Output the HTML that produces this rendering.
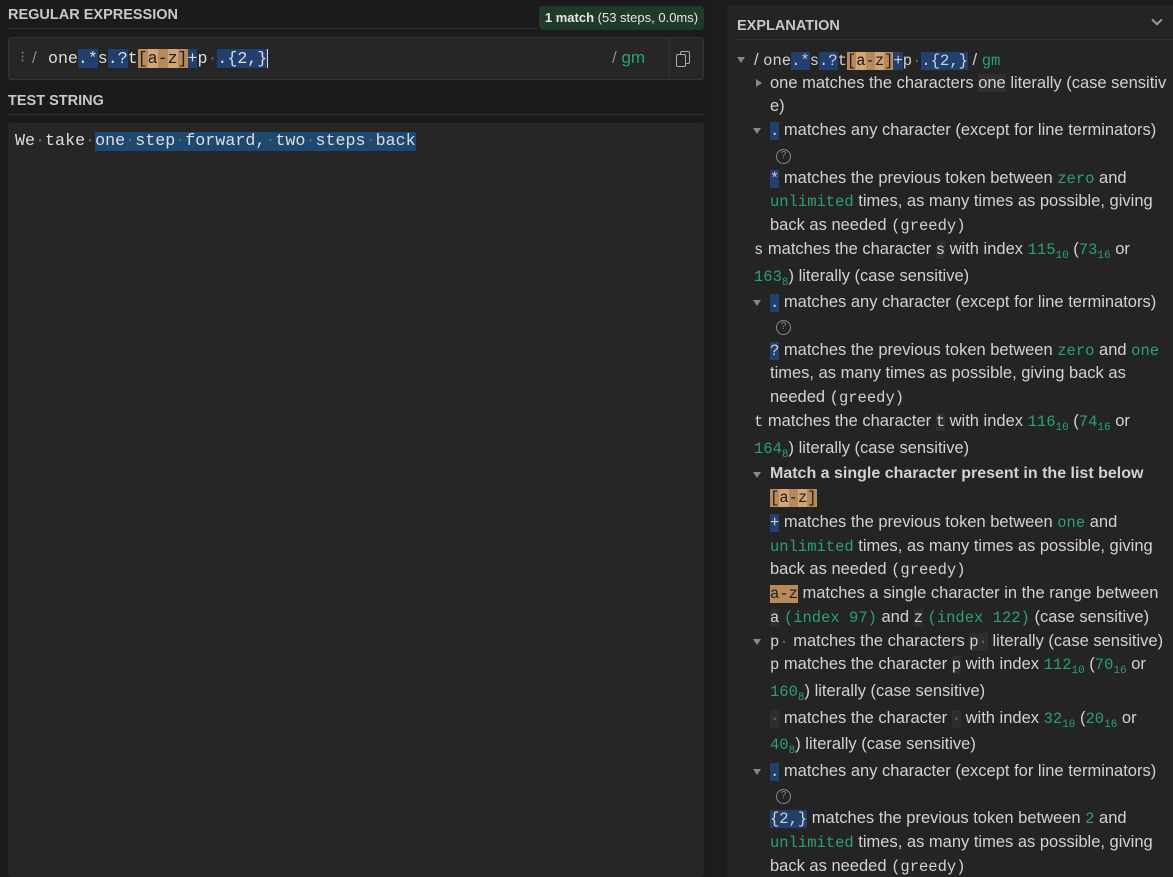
<!DOCTYPE html><html><head><style>
*{margin:0;padding:0;box-sizing:border-box}
body{width:1173px;height:877px;background:#1b1b1b;overflow:hidden;position:relative;font-family:"Liberation Sans",sans-serif;color:#d2d2d2}
.a{position:absolute;white-space:nowrap}
.m{font-family:"Liberation Mono",monospace}
.h{color:#c8c8c8;font-weight:bold;font-size:14.5px;letter-spacing:0}
.b{background:#22406e}
.o{background:#b8895b;color:#1e1e1e}
.o2{background:#d2a577}
.g{color:#29a36d}
.k{background:#2e2e2e}
.d{color:#666}
.ln{font-size:16.5px;line-height:20px}
.ln .m{font-size:15.5px}
sub{font-size:11px;vertical-align:-4px;line-height:0}
.tri{position:absolute;width:0;height:0;border-left:4.5px solid transparent;border-right:4.5px solid transparent;border-top:6px solid #888}
.trr{position:absolute;width:0;height:0;border-top:4.5px solid transparent;border-bottom:4.5px solid transparent;border-left:6px solid #888}
.q{position:absolute;width:15px;height:15px;border:1.5px solid #888;border-radius:50%;font-size:10px;color:#888;text-align:center;line-height:12px}
</style></head><body>
<div class="a h" style="left:8px;top:7px">REGULAR EXPRESSION</div>
<div class="a" style="left:8px;top:28px;width:530px;height:1px;background:#2e2e2e"></div>
<div class="a" style="left:539px;top:6px;width:165px;height:24px;background:#1f3a28;border-radius:4px;color:#e6e6e6;font-size:13px;line-height:24px;text-align:center"><b>1 match</b> (53 steps, 0.0ms)</div>
<div class="a" style="left:8px;top:37px;width:696px;height:43px;background:#262626;border:1px solid #333;border-radius:3px"></div>
<div class="a" style="left:669px;top:38px;width:1px;height:41px;background:#333"></div>
<div class="a" style="left:680px;top:51px;width:10px;height:13px;border:1.5px solid #aaa;border-radius:2px"></div>
<div class="a" style="left:676px;top:54px;width:10px;height:13px;border:1.5px solid #aaa;border-radius:2px;background:#262626"></div>
<div class="a d" style="left:20px;top:47px;font-size:16px;color:#777">⁝</div>
<div class="a" style="left:32px;top:48px;font-size:17px;color:#888">/</div>
<div class="a m" style="left:48px;top:49px;font-size:16.6px;color:#ddd">one<span class="b">.*</span>s<span class="b">.?</span>t<span class="o">[<span class="o2">a</span>-<span class="o2">z</span>]</span><span class="b">+</span>p<span class="d">·</span><span class="b">.{2,}</span><span style="border-left:1px solid #ddd"></span></div>
<div class="a" style="left:612px;top:48px;font-size:17px;color:#888">/ <span class="g">gm</span></div>
<div class="a h" style="left:8px;top:93px">TEST STRING</div>
<div class="a" style="left:8px;top:114px;width:696px;height:1px;background:#2e2e2e"></div>
<div class="a" style="left:8px;top:123px;width:696px;height:754px;background:#262626;border-radius:3px"></div>
<div class="a m" style="left:15px;top:131px;font-size:16.7px;line-height:22px;color:#ddd">We<span class="d">·</span>take<span class="d">·</span><span style="background:#1d4870">one<span class="d">·</span>step<span class="d">·</span>forward,<span class="d">·</span>two<span class="d">·</span>steps<span class="d">·</span>back</span></div>
<div class="a" style="left:712px;top:0;width:15px;height:877px;background:#1d1d1d"></div>
<div class="a" style="left:727px;top:5px;width:446px;height:872px;background:#242424"></div>
<div class="a h" style="left:737px;top:18px">EXPLANATION</div>
<div class="a" style="left:1153px;top:16px;width:8px;height:8px;border-right:2px solid #999;border-bottom:2px solid #999;transform:rotate(45deg)"></div>
<div class="a" style="left:737px;top:39px;width:436px;height:1px;background:#333"></div>

<div class="tri" style="left:737px;top:57px"></div>
<div class="a ln" style="left:754px;top:50px">/ <span class="m">one<span class="b">.*</span>s<span class="b">.?</span>t<span class="o">[<span class="o2">a</span>-<span class="o2">z</span>]</span><span class="b">+</span>p<span class="d">·</span><span class="b">.{2,}</span></span> / <span class="g m">gm</span></div>
<div class="trr" style="left:756px;top:79px"></div>
<div class="a ln" style="left:770px;top:73px">one matches the characters <span class="k">one</span> literally (case sensitiv</div>
<div class="a ln" style="left:770px;top:96px">e)</div>
<div class="tri" style="left:753px;top:128px"></div>
<div class="a ln" style="left:770px;top:120px"><span class="b m">.</span> matches any character (except for line terminators)</div>
<div class="q" style="left:776px;top:149px">?</div>
<div class="a ln" style="left:770px;top:168px"><span class="b m">*</span> matches the previous token between <span class="g m">zero</span> and</div>
<div class="a ln" style="left:770px;top:191px"><span class="g m">unlimited</span> times, as many times as possible, giving</div>
<div class="a ln" style="left:770px;top:215px">back as needed <span class="m">(greedy)</span></div>
<div class="a ln" style="left:754px;top:239px"><span class="m">s</span> matches the character <span class="k m">s</span> with index <span class="g m">115<sub>10</sub></span> (<span class="g m">73<sub>16</sub></span> or</div>
<div class="a ln" style="left:754px;top:266px"><span class="g m">163<sub>8</sub></span>) literally (case sensitive)</div>
<div class="tri" style="left:753px;top:300px"></div>
<div class="a ln" style="left:770px;top:292px"><span class="b m">.</span> matches any character (except for line terminators)</div>
<div class="q" style="left:776px;top:320px">?</div>
<div class="a ln" style="left:770px;top:340px"><span class="b m">?</span> matches the previous token between <span class="g m">zero</span> and <span class="g m">one</span></div>
<div class="a ln" style="left:770px;top:363px">times, as many times as possible, giving back as</div>
<div class="a ln" style="left:770px;top:387px">needed <span class="m">(greedy)</span></div>
<div class="a ln" style="left:754px;top:411px"><span class="m">t</span> matches the character <span class="k m">t</span> with index <span class="g m">116<sub>10</sub></span> (<span class="g m">74<sub>16</sub></span> or</div>
<div class="a ln" style="left:754px;top:438px"><span class="g m">164<sub>8</sub></span>) literally (case sensitive)</div>
<div class="tri" style="left:753px;top:472px"></div>
<div class="a ln" style="left:770px;top:464px;font-weight:bold;font-size:16px">Match a single character present in the list below</div>
<div class="a ln" style="left:770px;top:487px"><span class="o m">[<span class="o2">a</span>-<span class="o2">z</span>]</span></div>
<div class="a ln" style="left:770px;top:512px"><span class="b m">+</span> matches the previous token between <span class="g m">one</span> and</div>
<div class="a ln" style="left:770px;top:536px"><span class="g m">unlimited</span> times, as many times as possible, giving</div>
<div class="a ln" style="left:770px;top:559px">back as needed <span class="m">(greedy)</span></div>
<div class="a ln" style="left:770px;top:583px"><span class="o m">a-z</span> matches a single character in the range between</div>
<div class="a ln" style="left:770px;top:607px"><span class="k m">a</span> <span class="g m">(index 97)</span> and <span class="k m">z</span> <span class="g m">(index 122)</span> (case sensitive)</div>
<div class="tri" style="left:753px;top:639px"></div>
<div class="a ln" style="left:770px;top:631px"><span class="m">p<span class="d">·</span></span> matches the characters <span class="k m">p<span class="d">·</span></span> literally (case sensitive)</div>
<div class="a ln" style="left:770px;top:654px"><span class="m">p</span> matches the character <span class="k m">p</span> with index <span class="g m">112<sub>10</sub></span> (<span class="g m">70<sub>16</sub></span> or</div>
<div class="a ln" style="left:770px;top:681px"><span class="g m">160<sub>8</sub></span>) literally (case sensitive)</div>
<div class="a ln" style="left:770px;top:708px"><span class="k m d">·</span> matches the character <span class="k m d">·</span> with index <span class="g m">32<sub>10</sub></span> (<span class="g m">20<sub>16</sub></span> or</div>
<div class="a ln" style="left:770px;top:734px"><span class="g m">40<sub>8</sub></span>) literally (case sensitive)</div>
<div class="tri" style="left:753px;top:769px"></div>
<div class="a ln" style="left:770px;top:761px"><span class="b m">.</span> matches any character (except for line terminators)</div>
<div class="q" style="left:776px;top:789px">?</div>
<div class="a ln" style="left:770px;top:808px"><span class="b m">{2,}</span> matches the previous token between <span class="g m">2</span> and</div>
<div class="a ln" style="left:770px;top:832px"><span class="g m">unlimited</span> times, as many times as possible, giving</div>
<div class="a ln" style="left:770px;top:856px">back as needed <span class="m">(greedy)</span></div>
</body></html>
